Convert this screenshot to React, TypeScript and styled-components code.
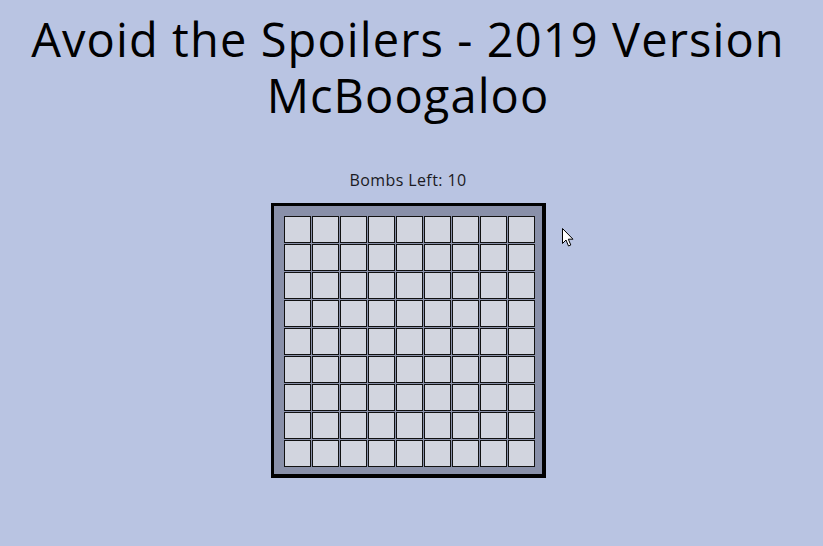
import React from "react";
import styled, { createGlobalStyle } from "styled-components";

const Global = createGlobalStyle`
  html, body {
    margin: 0;
    padding: 0;
    background: #b9c4e2;
  }
  body {
    font-family: "Open Sans", "Liberation Sans", sans-serif;
    color: #000;
  }
`;

const Page = styled.main`
  position: relative;
  width: 816px;
  height: 546px;
  display: flex;
  flex-direction: column;
  align-items: center;
`;

const Title = styled.h1`
  margin: 11px 0 0;
  font-family: "Open Sans", sans-serif;
  font-weight: 400;
  font-size: 47px;
  letter-spacing: 1.1px;
  line-height: 56px;
  text-align: center;
  color: #000;
  width: 800px;
`;

const BombsLabel = styled.div`
  margin-top: 47px;
  font-size: 16px;
  letter-spacing: 0.4px;
  line-height: 20px;
  color: #1a1a22;
`;

const Board = styled.div`
  margin-top: 13px;
  margin-left: 1px;
  box-sizing: border-box;
  width: 275px;
  height: 275px;
  background: #8990a9;
  border-style: solid;
  border-color: #000;
  border-width: 3px 4px 4px 3px;
  padding: 10px 7px 7px 10px;
  display: grid;
  grid-template-columns: repeat(9, 27px);
  grid-template-rows: repeat(9, 27px);
  gap: 1px;
`;

const Cell = styled.button<{ $revealed?: boolean }>`
  box-sizing: border-box;
  width: 27px;
  height: 27px;
  padding: 0;
  margin: 0;
  border: 1px solid #111;
  background: ${(p) => (p.$revealed ? "#eef0f5" : "#d2d5df")};
  cursor: pointer;
`;

const Pointer = styled.svg`
  position: absolute;
  left: 562px;
  top: 228px;
  pointer-events: none;
`;

export default function App() {
  const cells = Array.from({ length: 81 }, (_, i) => i);
  return (
    <>
      <Global />
      <Page>
        <Title>
          Avoid the Spoilers - 2019 Version McBoogaloo
        </Title>
        <BombsLabel>Bombs Left: 10</BombsLabel>
        <Board>
          {cells.map((i) => (
            <Cell key={i} aria-label={`cell ${i}`} />
          ))}
        </Board>
        <Pointer width="13" height="20" viewBox="0 0 13 20">
          <path
            d="M0.5 0.5 L0.5 15.5 L4 12 L6.5 18 L8.8 17 L6.3 11.2 L11 11.2 Z"
            fill="#fff"
            stroke="#000"
            strokeWidth="1"
            strokeLinejoin="round"
          />
        </Pointer>
      </Page>
    </>
  );
}
